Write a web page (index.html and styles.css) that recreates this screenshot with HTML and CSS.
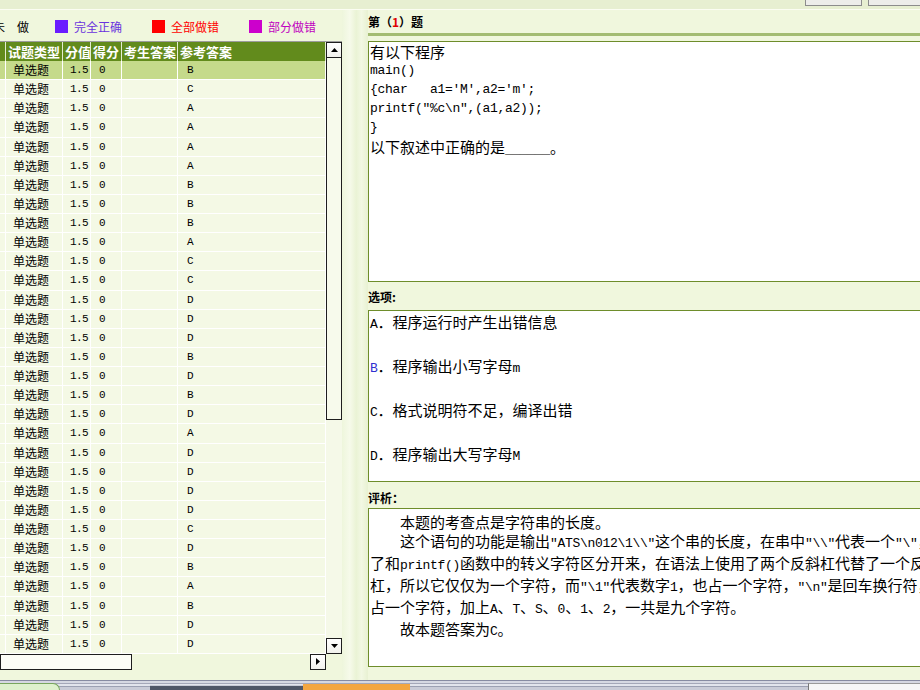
FILE: index.html
```html
<!DOCTYPE html>
<html lang="zh-CN">
<head>
<meta charset="utf-8">
<title>试题浏览</title>
<link rel="stylesheet" href="styles.css">
</head>
<body>
<div class="app">
  <div class="topbar">
    <div class="tbtn"></div>
    <div class="tbtn wide"></div>
  </div>
  <div class="main">
    <div class="left">
      <div class="legend">
        <span class="lg-undone">未　做</span>
        <span class="lg-item first"><i class="sw purple"></i><span class="t-purple">完全正确</span></span>
        <span class="lg-item"><i class="sw red"></i><span class="t-red">全部做错</span></span>
        <span class="lg-item"><i class="sw magenta"></i><span class="t-magenta">部分做错</span></span>
      </div>
      <div class="grid">
        <div class="tbl">
          <div class="thead"><span></span><span>试题类型</span><span>分值</span><span>得分</span><span>考生答案</span><span>参考答案</span></div>
          <div class="trow sel"><span></span><span>单选题</span><span class="m">1.5</span><span class="m">0</span><span></span><span class="m">B</span></div>
          <div class="trow"><span></span><span>单选题</span><span class="m">1.5</span><span class="m">0</span><span></span><span class="m">C</span></div>
          <div class="trow"><span></span><span>单选题</span><span class="m">1.5</span><span class="m">0</span><span></span><span class="m">A</span></div>
          <div class="trow"><span></span><span>单选题</span><span class="m">1.5</span><span class="m">0</span><span></span><span class="m">A</span></div>
          <div class="trow"><span></span><span>单选题</span><span class="m">1.5</span><span class="m">0</span><span></span><span class="m">A</span></div>
          <div class="trow"><span></span><span>单选题</span><span class="m">1.5</span><span class="m">0</span><span></span><span class="m">A</span></div>
          <div class="trow"><span></span><span>单选题</span><span class="m">1.5</span><span class="m">0</span><span></span><span class="m">B</span></div>
          <div class="trow"><span></span><span>单选题</span><span class="m">1.5</span><span class="m">0</span><span></span><span class="m">B</span></div>
          <div class="trow"><span></span><span>单选题</span><span class="m">1.5</span><span class="m">0</span><span></span><span class="m">B</span></div>
          <div class="trow"><span></span><span>单选题</span><span class="m">1.5</span><span class="m">0</span><span></span><span class="m">A</span></div>
          <div class="trow"><span></span><span>单选题</span><span class="m">1.5</span><span class="m">0</span><span></span><span class="m">C</span></div>
          <div class="trow"><span></span><span>单选题</span><span class="m">1.5</span><span class="m">0</span><span></span><span class="m">C</span></div>
          <div class="trow"><span></span><span>单选题</span><span class="m">1.5</span><span class="m">0</span><span></span><span class="m">D</span></div>
          <div class="trow"><span></span><span>单选题</span><span class="m">1.5</span><span class="m">0</span><span></span><span class="m">D</span></div>
          <div class="trow"><span></span><span>单选题</span><span class="m">1.5</span><span class="m">0</span><span></span><span class="m">D</span></div>
          <div class="trow"><span></span><span>单选题</span><span class="m">1.5</span><span class="m">0</span><span></span><span class="m">B</span></div>
          <div class="trow"><span></span><span>单选题</span><span class="m">1.5</span><span class="m">0</span><span></span><span class="m">D</span></div>
          <div class="trow"><span></span><span>单选题</span><span class="m">1.5</span><span class="m">0</span><span></span><span class="m">B</span></div>
          <div class="trow"><span></span><span>单选题</span><span class="m">1.5</span><span class="m">0</span><span></span><span class="m">D</span></div>
          <div class="trow"><span></span><span>单选题</span><span class="m">1.5</span><span class="m">0</span><span></span><span class="m">A</span></div>
          <div class="trow"><span></span><span>单选题</span><span class="m">1.5</span><span class="m">0</span><span></span><span class="m">D</span></div>
          <div class="trow"><span></span><span>单选题</span><span class="m">1.5</span><span class="m">0</span><span></span><span class="m">D</span></div>
          <div class="trow"><span></span><span>单选题</span><span class="m">1.5</span><span class="m">0</span><span></span><span class="m">D</span></div>
          <div class="trow"><span></span><span>单选题</span><span class="m">1.5</span><span class="m">0</span><span></span><span class="m">D</span></div>
          <div class="trow"><span></span><span>单选题</span><span class="m">1.5</span><span class="m">0</span><span></span><span class="m">C</span></div>
          <div class="trow"><span></span><span>单选题</span><span class="m">1.5</span><span class="m">0</span><span></span><span class="m">D</span></div>
          <div class="trow"><span></span><span>单选题</span><span class="m">1.5</span><span class="m">0</span><span></span><span class="m">B</span></div>
          <div class="trow"><span></span><span>单选题</span><span class="m">1.5</span><span class="m">0</span><span></span><span class="m">A</span></div>
          <div class="trow"><span></span><span>单选题</span><span class="m">1.5</span><span class="m">0</span><span></span><span class="m">B</span></div>
          <div class="trow"><span></span><span>单选题</span><span class="m">1.5</span><span class="m">0</span><span></span><span class="m">D</span></div>
          <div class="trow"><span></span><span>单选题</span><span class="m">1.5</span><span class="m">0</span><span></span><span class="m">D</span></div>
        </div>
        <div class="vscroll">
          <div class="sbtn"><svg width="7" height="4" viewBox="0 0 7 4"><polygon points="0,4 7,4 3.5,0" fill="#000"/></svg></div>
          <div class="vthumb"></div>
          <div class="vtrack"></div>
          <div class="sbtn"><svg width="7" height="4" viewBox="0 0 7 4"><polygon points="0,0 7,0 3.5,4" fill="#000"/></svg></div>
        </div>
      </div>
      <div class="hscroll">
        <div class="hthumb"></div>
        <div class="hspace"></div>
        <div class="sbtn"><svg width="4" height="7" viewBox="0 0 4 7"><polygon points="0,0 4,3.5 0,7" fill="#000"/></svg></div>
      </div>
    </div>
    <div class="splitter"></div>
    <div class="right">
      <div class="qtitle">第（<span class="red">1</span>）题</div>
      <div class="rule"></div>
      <div class="box qbox">
        <div>有以下程序</div>
        <div class="a">main()</div>
        <div class="a">{char&nbsp;&nbsp;&nbsp;a1='M',a2='m';</div>
        <div class="a">printf("%c\n",(a1,a2));</div>
        <div class="a">}</div>
        <div>以下叙述中正确的是<span class="a">______</span>。</div>
      </div>
      <div class="label">选项:</div>
      <div class="box obox">
        <div class="opt"><span class="a">A</span>．程序运行时产生出错信息</div>
        <div class="opt"><span class="a blue">B</span>．程序输出小写字母<span class="a">m</span></div>
        <div class="opt"><span class="a">C</span>．格式说明符不足，编译出错</div>
        <div class="opt"><span class="a">D</span>．程序输出大写字母<span class="a">M</span></div>
      </div>
      <div class="label label2">评析：</div>
      <div class="box abox">
        <div class="ind">本题的考查点是字符串的长度。</div>
        <div class="ind">这个语句的功能是输出<span class="a">"ATS\n012\1\\"</span>这个串的长度，在串中<span class="a">"\\"</span>代表一个<span class="a">"\"</span>，为</div>
        <div>了和<span class="a">printf()</span>函数中的转义字符区分开来，在语法上使用了两个反斜杠代替了一个反斜</div>
        <div>杠，所以它仅仅为一个字符，而<span class="a">"\1"</span>代表数字<span class="a">1</span>，也占一个字符，<span class="a">"\n"</span>是回车换行符，也</div>
        <div>占一个字符，加上<span class="a">A</span>、<span class="a">T</span>、<span class="a">S</span>、<span class="a">0</span>、<span class="a">1</span>、<span class="a">2</span>，一共是九个字符。</div>
        <div class="ind">故本题答案为<span class="a">C</span>。</div>
      </div>
    </div>
  </div>
  <div class="taskbar">
    <div class="tk-green"></div>
    <div class="tk-gap1"></div>
    <div class="tk-dark"></div>
    <div class="tk-orange"></div>
    <div class="tk-fill"></div>
    <div class="tk-white"></div>
  </div>
</div>
</body>
</html>
```

FILE: styles.css
```css
* { box-sizing: border-box; margin: 0; padding: 0; }
html, body { width: 920px; height: 690px; overflow: hidden; }
body {
  background: #f0f7dd;
  font-family: "Noto Sans CJK SC", sans-serif;
  font-size: 12px;
  color: #000;
}
.app { height: 690px; display: flex; flex-direction: column; }

/* top strip */
.topbar {
  height: 10px; flex: none; display: flex; gap: 6px;
  padding-left: 805px;
  background: #e7efd1;
  border-bottom: 1px solid #fbfdf2;
}
.tbtn { flex: none; width: 57px; height: 6px; border: 1px solid #8c8c8c; border-top: none; background: #ededea; }
.tbtn.wide { width: 60px; }

.main { flex: 1; display: flex; min-height: 0; }

/* left list */
.left { width: 342px; flex: none; display: flex; flex-direction: column; }
.legend { height: 31px; flex: none; display: flex; align-items: center; padding-top: 1px; white-space: nowrap; }
.lg-undone { margin-left: -7px; width: 36px; flex: none; }
.lg-item { display: flex; align-items: center; gap: 6px; margin-left: 30px; }
.lg-item.first { margin-left: 26px; }
.sw { display: block; width: 13px; height: 13px; }
.sw.purple { background: #6a1cff; }
.sw.red { background: #ff0000; }
.sw.magenta { background: #cc00cc; }
.t-purple { color: #6a33dd; }
.t-red { color: #ff0000; }
.t-magenta { color: #c000c0; }

.grid { display: flex; border-top: 1px solid #9c9c9c; flex: none; }
.tbl { width: 326px; flex: none; }
.thead, .trow { display: grid; grid-template-columns: 6px 57px 28px 31px 56px 148px; }
.thead { height: 19px; background: #628b1c; color: #fff; font-weight: 700; font-size: 13px; line-height: 19px; }
.thead span { border-right: 1px solid #e3ecd2; padding-left: 2px; white-space: nowrap; overflow: hidden; }
.trow { height: 19.13px; background: #f4f9e5; border-bottom: 1px solid #fff; line-height: 18px; }
.trow span { border-right: 1px solid #fff; padding-left: 8px; white-space: nowrap; overflow: hidden; }
.trow span:first-child { padding: 0; }
.trow span:nth-child(2) { padding-left: 7px; }
.trow span:nth-child(3) { padding-left: 7px; }
.trow span:last-child { padding-left: 9px; }
.trow.sel { background: #c5da8b; }
.m { font-family: "Liberation Mono", monospace; font-size: 11px; letter-spacing: -0.6px; }

.vscroll { width: 16px; flex: none; display: flex; flex-direction: column; background: #f5f9e8; }
.sbtn {
  width: 16px; height: 16px; flex: none;
  border: 1px solid #1e1e1e;
  background: linear-gradient(#ffffff, #f1f1ec);
  display: flex; align-items: center; justify-content: center;
}
.vthumb { height: 362px; flex: none; border: 1px solid #1e1e1e; border-top: none; background: #f7faec; }
.vtrack { flex: 1; }

.hscroll { height: 16px; flex: none; display: flex; }
.hthumb { width: 132px; flex: none; border: 1px solid #1e1e1e; background: #fcfdf6; }
.hspace { width: 178px; flex: none; }

.splitter {
  width: 26px; flex: none;
  background: linear-gradient(to right, #eef6dc 0, #f6faea 30%, #eaf3d5 55%, #f2f8e3 75%, #e8f1d2 100%);
}

/* right detail */
.right { width: 560px; flex: none; display: flex; flex-direction: column; }
.qtitle { height: 21px; flex: none; display: flex; align-items: center; font-weight: 700; font-size: 12px; padding-top: 1px; }
.red { color: #e00000; }
.rule { height: 3px; flex: none; margin-top: 2px; background: #a3bc72; }
.box { background: #fff; border: 1px solid #6e8d2b; flex: none; font-size: 15px; line-height: 19px; padding-left: 1px; white-space: nowrap; overflow: hidden; }
.qbox { margin-top: 5px; height: 241px; }
.label { height: 28px; flex: none; display: flex; align-items: center; font-weight: 700; font-size: 12px; }
.label2 { height: 26px; padding-top: 4px; }
.obox { height: 172px; line-height: 22px; }
.opt { height: 22px; margin-bottom: 22px; }
.abox { height: 159px; padding-top: 3px; }
.ind { text-indent: 30px; }
.a { font-family: "Liberation Mono", monospace; font-size: 13px; letter-spacing: -0.3px; }
.blue { color: #3030d0; }

/* bottom task strip */
.taskbar {
  height: 10px; flex: none; display: flex; align-items: flex-end;
  background: linear-gradient(#878ba2 0 1px, #d6d8e2 1px 3px, #a4a7b8 3px 4px, #e2e4ec 4px 6px, #9ca0b2 6px 7px, #c9cbd7 7px 10px);
}
.tk-green { width: 60px; height: 7px; background: #def1cd; border: 1px solid #78a65e; border-bottom: none; border-left: none; border-radius: 0 8px 0 0; }
.tk-gap1 { width: 90px; }
.tk-dark { width: 153px; height: 5px; background: #4f5667; border-top: 1px solid #c8cad6; }
.tk-orange { width: 107px; height: 6px; background: #f3a641; }
.tk-fill { flex: 1; }
.tk-white { width: 112px; height: 7px; background: #f7f7f7; border-top: 1px solid #9a9a9a; border-left: 1px solid #777; }
```
